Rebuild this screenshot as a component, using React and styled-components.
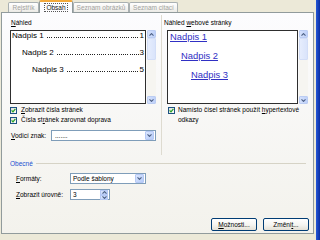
import React from 'react';
import styled, { createGlobalStyle, css } from 'styled-components';

const Global = createGlobalStyle`
  html, body { margin: 0; padding: 0; background: #ECE9D8; }
  body { font-family: "Liberation Sans", Arial, sans-serif; }
`;

const Screen = styled.div`
  width: 320px;
  height: 240px;
  overflow: hidden;
  display: flex;
  background: #ECE9D8;
  font-family: "Liberation Sans", Arial, sans-serif;
  font-size: 6.5px;
  color: #000;
`;

const Dialog = styled.div`
  width: 313px;
  margin-left: 1px;
  display: flex;
  flex-direction: column;
`;

const WindowFrame = styled.div`
  width: 4px;
  margin-left: 2px;
  background: linear-gradient(90deg, #2457D8, #0B2EA0);
`;

const TabStrip = styled.div`
  height: 12px;
  display: flex;
  align-items: flex-end;
  padding-left: 7px;
`;

const Tab = styled.div`
  box-sizing: border-box;
  width: ${p => p.$w}px;
  height: 10px;
  display: flex;
  align-items: center;
  justify-content: center;
  border: 1px solid #A9B0B2;
  border-bottom: none;
  border-radius: 2px 2px 0 0;
  background: linear-gradient(#FFFFFF, #ECEBE6);
  color: #A3A3A0;
  white-space: nowrap;
  ${p => p.$active && css`
    height: 13px;
    margin-bottom: -1px;
    position: relative;
    z-index: 1;
    background: #FCFCFE;
    color: #111;
    border-color: #919B9C;
    border-top: 2px solid #F3A93A;
    padding-bottom: 1px;
  `}
`;

const FocusText = styled.span`
  outline: 1px dotted #555;
  outline-offset: 0px;
  padding: 0 1px;
  line-height: 7px;
`;

const Panel = styled.div`
  box-sizing: border-box;
  height: 222px;
  border: 1px solid #919B9C;
  background: linear-gradient(#FCFCFE, #F3F2EC);
  padding: 2px 4px 2px 8px;
  display: flex;
  flex-direction: column;
`;

const TopSection = styled.div`
  display: grid;
  grid-template-columns: 151px 1fr;
`;

const Column = styled.div`
  display: flex;
  flex-direction: column;
  padding-top: 4px;
  ${p => p.$left && css`padding-bottom: 14px;`}
  ${p => p.$right && css`border-left: 1px solid #DEDBD0;`}
`;

const Label = styled.div`
  height: 8px;
  line-height: 8px;
  margin-left: ${p => p.$ml || 0}px;
  white-space: nowrap;
`;

const U = styled.span`
  text-decoration: underline;
`;

const PreviewRow = styled.div`
  display: flex;
  margin-top: 3px;
  margin-left: ${p => p.$ml || 0}px;
`;

const PreviewBox = styled.div`
  box-sizing: border-box;
  width: ${p => p.$w}px;
  height: 74px;
  border: 1px solid #2E2E2E;
  background: #fff;
  display: flex;
  flex-direction: column;
  gap: ${p => p.$gap}px;
  overflow: hidden;
`;

const TocEntry = styled.div`
  display: flex;
  align-items: flex-end;
  padding-left: ${p => p.$indent}px;
  padding-right: 1px;
  height: 9px;
  line-height: 9px;
  font-size: 8px;
  white-space: nowrap;
`;

const Leader = styled.span`
  flex: 1;
  height: 1px;
  margin: 0 1px 2px 3px;
  background-image: repeating-linear-gradient(90deg, #222 0 1px, transparent 1px 2.2px);
`;

const WebLink = styled.div`
  padding-left: ${p => p.$indent}px;
  line-height: 11px;
  font-size: 9.4px;
  color: #3030C4;
  text-decoration: underline;
  white-space: nowrap;
`;

const ScrollBar = styled.div`
  box-sizing: border-box;
  width: 9px;
  height: 74px;
  margin-left: 1px;
  display: flex;
  flex-direction: column;
  background: #F6F5F1;
`;

const ScrollBtn = styled.div`
  box-sizing: border-box;
  height: 8px;
  border: 1px solid #BCCDF3;
  border-radius: 1px;
  background: linear-gradient(90deg, #D5E1FC, #BFD1F9);
  display: flex;
  align-items: center;
  justify-content: center;
`;

const Track = styled.div`
  flex: 1;
`;

const Thumb = styled.div`
  height: ${p => p.$h}px;
  box-sizing: border-box;
  border: 1px solid #D3DEF7;
  border-radius: 1px;
  background: linear-gradient(90deg, #E6EDFD, #DAE4FB);
`;

const CheckRow = styled.div`
  display: flex;
  align-items: ${p => (p.$top ? 'flex-start' : 'center')};
  min-height: 10px;
  line-height: 10px;
  margin-top: ${p => p.$mt || 0}px;
  margin-left: ${p => p.$ml || 0}px;
  white-space: nowrap;
`;

const CheckBox = styled.span`
  box-sizing: border-box;
  width: 7px;
  height: 7px;
  flex-shrink: 0;
  margin-right: ${p => p.$gap}px;
  margin-top: ${p => p.$mt || 0}px;
  border: 1px solid #1C5180;
  background: linear-gradient(135deg, #DCDCD7, #FFFFFF);
  display: flex;
  align-items: center;
  justify-content: center;
`;

const FieldRow = styled.div`
  display: flex;
  align-items: center;
  height: 11px;
  margin-top: ${p => p.$mt || 0}px;
  white-space: nowrap;
`;

const FieldLabel = styled.span`
  width: ${p => p.$w}px;
  margin-left: ${p => p.$ml}px;
  flex-shrink: 0;
`;

const Combo = styled.div`
  box-sizing: border-box;
  width: ${p => p.$w}px;
  height: 11px;
  border: 1px solid #7F9DB9;
  background: #fff;
  display: flex;
  align-items: center;
  padding-left: ${p => p.$pl}px;
  padding-right: 1px;
`;

const ComboText = styled.span`
  flex: 1;
  line-height: 9px;
`;

const ComboButton = styled.span`
  box-sizing: border-box;
  width: 9px;
  height: 9px;
  border: 1px solid #B6C9F5;
  border-radius: 1px;
  background: linear-gradient(135deg, #DCE7FE, #B5CBF8);
  display: flex;
  align-items: center;
  justify-content: center;
`;

const SpinButtons = styled.span`
  width: 8px;
  height: 9px;
  display: flex;
  flex-direction: column;
`;

const SpinHalf = styled.span`
  flex: 1;
  box-sizing: border-box;
  border: 1px solid #B6C9F5;
  background: linear-gradient(135deg, #DCE7FE, #B5CBF8);
  display: flex;
  align-items: center;
  justify-content: center;
`;

const SectionHeader = styled.div`
  display: flex;
  align-items: center;
  height: 8px;
  margin-top: 4px;
  color: #1C4FD0;
`;

const Rule = styled.div`
  flex: 1;
  height: 1px;
  margin: 1px 3px 0 3px;
  background: #D6D3C6;
`;

const ButtonRow = styled.div`
  margin-top: auto;
  display: flex;
  justify-content: flex-end;
  gap: 6px;
`;

const Button = styled.button`
  box-sizing: border-box;
  width: 46px;
  height: 13px;
  padding: 0;
  border: 1px solid #003C74;
  border-radius: 2px;
  background: linear-gradient(#FFFFFF 0%, #F4F4F0 55%, #E3E0D6 100%);
  font-family: inherit;
  font-size: 6.5px;
  color: #000;
  line-height: 11px;
`;

const Chevron = ({ up }) => (
  <svg width="5" height="3" viewBox="0 0 5 3">
    <path
      d={up ? 'M0.5 2.6 L2.5 0.6 L4.5 2.6' : 'M0.5 0.4 L2.5 2.4 L4.5 0.4'}
      fill="none"
      stroke="#4D6185"
      strokeWidth="1.1"
    />
  </svg>
);

const Tick = () => (
  <svg width="5" height="5" viewBox="0 0 5 5">
    <path d="M0.6 2.4 L2 3.8 L4.4 0.9" fill="none" stroke="#21A121" strokeWidth="1.2" />
  </svg>
);

const Scroll = ({ thumb }) => (
  <ScrollBar>
    <ScrollBtn><Chevron up /></ScrollBtn>
    <Track><Thumb $h={thumb} /></Track>
    <ScrollBtn><Chevron /></ScrollBtn>
  </ScrollBar>
);

const tocEntries = [
  { title: 'Nadpis 1', page: '1', indent: 1 },
  { title: 'Nadpis 2', page: '3', indent: 11 },
  { title: 'Nadpis 3', page: '5', indent: 21 },
];

const webEntries = [
  { title: 'Nadpis 1', indent: 2 },
  { title: 'Nadpis 2', indent: 13 },
  { title: 'Nadpis 3', indent: 23 },
];

export default function App() {
  return (
    <>
      <Global />
      <Screen>
        <Dialog>
          <TabStrip>
            <Tab $w={31}>Rejstřík</Tab>
            <Tab $w={34} $active><FocusText>Obsah</FocusText></Tab>
            <Tab $w={56}>Seznam obrázků</Tab>
            <Tab $w={49}>Seznam citací</Tab>
          </TabStrip>
          <Panel>
            <TopSection>
              <Column $left>
                <Label $ml={1}><U>N</U>áhled</Label>
                <PreviewRow>
                  <PreviewBox $w={136} $gap={8}>
                    {tocEntries.map(e => (
                      <TocEntry key={e.title} $indent={e.indent}>
                        <span>{e.title}</span>
                        <Leader />
                        <span>{e.page}</span>
                      </TocEntry>
                    ))}
                  </PreviewBox>
                  <Scroll thumb={22} />
                </PreviewRow>
                <CheckRow $mt={1}>
                  <CheckBox $gap={4}><Tick /></CheckBox>
                  <span><U>Z</U>obrazit čísla stránek</span>
                </CheckRow>
                <CheckRow>
                  <CheckBox $gap={4}><Tick /></CheckBox>
                  <span>Čísla st<U>r</U>ánek zarovnat doprava</span>
                </CheckRow>
                <FieldRow $mt={5}>
                  <FieldLabel $w={40} $ml={1}><U>V</U>odicí znak:</FieldLabel>
                  <Combo $w={105} $pl={3}>
                    <ComboText>.......</ComboText>
                    <ComboButton><Chevron /></ComboButton>
                  </Combo>
                </FieldRow>
              </Column>
              <Column $right>
                <Label $ml={2}>Náhled <U>w</U>ebové stránky</Label>
                <PreviewRow $ml={5}>
                  <PreviewBox $w={131} $gap={8}>
                    {webEntries.map(e => (
                      <WebLink key={e.title} $indent={e.indent}>{e.title}</WebLink>
                    ))}
                  </PreviewBox>
                  <Scroll thumb={22} />
                </PreviewRow>
                <CheckRow $mt={1} $ml={6} $top>
                  <CheckBox $gap={3} $mt={2}><Tick /></CheckBox>
                  <span>
                    Namísto čísel stránek použít <U>h</U>ypertextové
                    <br />
                    odkazy
                  </span>
                </CheckRow>
              </Column>
            </TopSection>
            <SectionHeader>
              <span>Obecné</span>
              <Rule />
            </SectionHeader>
            <FieldRow $mt={6}>
              <FieldLabel $w={54} $ml={6}><U>F</U>ormáty:</FieldLabel>
              <Combo $w={76} $pl={2}>
                <ComboText>Podle šablony</ComboText>
                <ComboButton><Chevron /></ComboButton>
              </Combo>
            </FieldRow>
            <FieldRow $mt={5}>
              <FieldLabel $w={54} $ml={6}><U>Z</U>obrazit úrovně:</FieldLabel>
              <Combo $w={40} $pl={2}>
                <ComboText>3</ComboText>
                <SpinButtons>
                  <SpinHalf><Chevron up /></SpinHalf>
                  <SpinHalf><Chevron /></SpinHalf>
                </SpinButtons>
              </Combo>
            </FieldRow>
            <ButtonRow>
              <Button><U>M</U>ožnosti...</Button>
              <Button>Změni<U>t</U>...</Button>
            </ButtonRow>
          </Panel>
        </Dialog>
        <WindowFrame />
      </Screen>
    </>
  );
}
